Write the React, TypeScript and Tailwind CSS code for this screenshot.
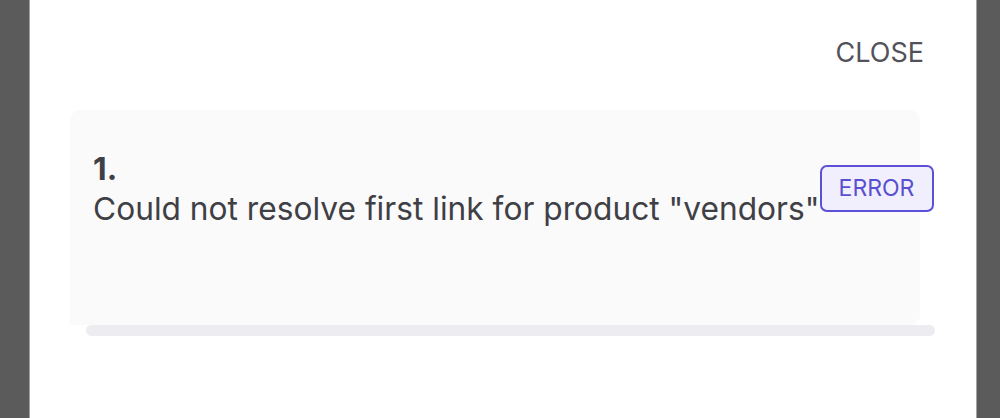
export default function App() {
    return (
        <div className="w-[1000px] h-[418px] bg-[#5b5b5b] flex overflow-hidden" style={{ fontFamily: 'Inter, "Noto Sans", sans-serif' }}>
            <div className="ml-[29px] w-[948px] h-full bg-white border-x border-[#a3a3a3] flex flex-col">
                {/* header */}
                <div className="flex justify-end pt-[36px] pr-[52px]">
                    <button className="text-[27px] leading-[34px] text-[#52525b]">CLOSE</button>
                </div>

                {/* card */}
                <div className="mt-[40px] ml-[40px] w-[850px] h-[215px] bg-[#fafafa] rounded-tl-[10px] rounded-r-[10px]">
                    <div className="flex items-start pl-[23px] pt-[39px]">
                        <div className="shrink-0 whitespace-nowrap text-[#3f3f46] text-[31.7px] leading-[40px]">
                            <div className="font-bold">1.</div>
                            <div>Could not resolve first link for product "vendors"</div>
                        </div>
                        <span className="mt-[16px] shrink-0 flex items-center justify-center w-[114px] h-[47px] rounded-[7px] border-2 border-[#5b50d6] bg-[#f1effe] text-[#5a4fcf] text-[23px]">
                            ERROR
                        </span>
                    </div>
                </div>

                {/* horizontal scrollbar */}
                <div className="ml-[56px] w-[849px] h-[11px] rounded-full bg-[#ececf1]" />
            </div>
        </div>
    );
}
